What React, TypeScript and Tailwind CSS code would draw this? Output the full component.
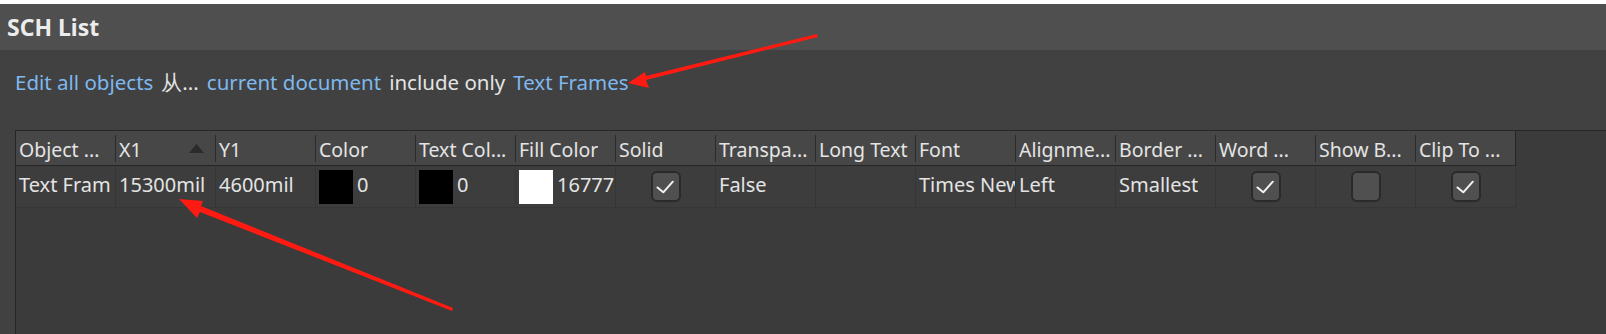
import React from 'react';

type Col = { title: string; sorted?: boolean };

const columns: Col[] = [
  { title: 'Object ...' },
  { title: 'X1', sorted: true },
  { title: 'Y1' },
  { title: 'Color' },
  { title: 'Text Col...' },
  { title: 'Fill Color' },
  { title: 'Solid' },
  { title: 'Transpa...' },
  { title: 'Long Text' },
  { title: 'Font' },
  { title: 'Alignme...' },
  { title: 'Border ...' },
  { title: 'Word ...' },
  { title: 'Show B...' },
  { title: 'Clip To ...' },
];

const Check: React.FC<{ checked: boolean }> = ({ checked }) => (
  <div className="w-[30px] h-[31px] rounded-[6px] bg-[#505050] border-2 border-[#2a2a2a] flex items-center justify-center">
    {checked && (
      <svg width="30" height="31" viewBox="0 0 30 31" className="-m-[2px]">
        <path d="M6.5 16.5 L12.3 21.3 L21.8 10.7" fill="none" stroke="#f2f2f2" strokeWidth="2" strokeLinecap="round" strokeLinejoin="round" />
      </svg>
    )}
  </div>
);

const Swatch: React.FC<{ color: string; value: string }> = ({ color, value }) => (
  <div className="flex items-center gap-[4px] pl-[3px] min-w-0">
    <div className={`w-[34px] h-[34px] shrink-0 ${color}`} />
    <span className="pb-[3px] whitespace-nowrap overflow-hidden">{value}</span>
  </div>
);

const TextCell: React.FC<{ text: string }> = ({ text }) => (
  <span className="pl-[3px] pb-[3px] whitespace-nowrap overflow-hidden">{text}</span>
);

const CheckCell: React.FC<{ checked: boolean }> = ({ checked }) => (
  <div className="w-full flex justify-center">
    <Check checked={checked} />
  </div>
);

const cells: React.ReactNode[] = [
  <TextCell text="Text Fram" />,
  <TextCell text="15300mil" />,
  <TextCell text="4600mil" />,
  <Swatch color="bg-black" value="0" />,
  <Swatch color="bg-black" value="0" />,
  <Swatch color="bg-white" value="16777" />,
  <CheckCell checked />,
  <TextCell text="False" />,
  <TextCell text="" />,
  <TextCell text="Times New" />,
  <TextCell text="Left" />,
  <TextCell text="Smallest" />,
  <CheckCell checked />,
  <CheckCell checked={false} />,
  <CheckCell checked />,
];

export default function App() {
  return (
    <div className="relative w-[1606px] h-[334px] overflow-hidden bg-white pt-[4px] flex flex-col font-['Noto_Sans',sans-serif] text-[#e4e4e4]">
      {/* title bar */}
      <div className="h-[46px] shrink-0 bg-[#4f4f4f] flex items-center px-[7px]">
        <span className="text-[23px] font-bold text-[#ececec]">SCH List</span>
      </div>

      <div className="flex-1 bg-[#414141] flex flex-col">
        {/* filter line */}
        <div className="h-[64px] shrink-0 flex items-center pl-[15px] text-[20.5px] gap-[8px] whitespace-nowrap">
          <span className="text-[#7fb8ee]">Edit all objects</span>
          <span>从...</span>
          <span className="text-[#7fb8ee]">current document</span>
          <span>include only</span>
          <span className="text-[#7fb8ee]">Text Frames</span>
        </div>

        {/* grid */}
        <div className="mt-[16px] ml-[15px] flex-1 bg-[#3b3b3b] border-l border-t border-[#262626]">
          <div className="flex h-[35px] text-[19.5px]">
            {columns.map((c, i) => (
              <div
                key={c.title}
                className={`w-[100px] shrink-0 bg-[#474747] border-b border-[#262626] flex items-center relative ${
                  i === columns.length - 1 ? 'border-r' : ''
                }`}
              >
                <span className="pl-[3px] pt-[3px] whitespace-nowrap overflow-hidden">{c.title}</span>
                {c.sorted && (
                  <svg width="15" height="9" viewBox="0 0 15 9" className="ml-auto mr-[12px] shrink-0">
                    <path d="M7.5 0 L15 9 L0 9 Z" fill="#2b2b2b" />
                  </svg>
                )}
                {i < columns.length - 1 && (
                  <div className="absolute right-0 top-[4px] bottom-[3px] w-px bg-[#2b2b2b]" />
                )}
              </div>
            ))}
          </div>
          <div className="flex h-[42px] text-[20px]">
            {cells.map((cell, i) => (
              <div
                key={i}
                className="w-[100px] shrink-0 bg-[#3d3d3d] border-r border-b border-[#363636] flex items-center overflow-hidden"
              >
                {cell}
              </div>
            ))}
          </div>
        </div>
      </div>

      {/* annotation arrows */}
      <svg className="absolute inset-0 pointer-events-none" width="1606" height="334" viewBox="0 0 1606 334">
        <polygon points="817,34 818,37 646,80 649,88 628,83 645,72 646,76" fill="#ff1a12" />
        <polygon points="453,308 452,311 200,212 197,218 179,199 203,201 201,206" fill="#ff1a12" />
      </svg>
    </div>
  );
}
